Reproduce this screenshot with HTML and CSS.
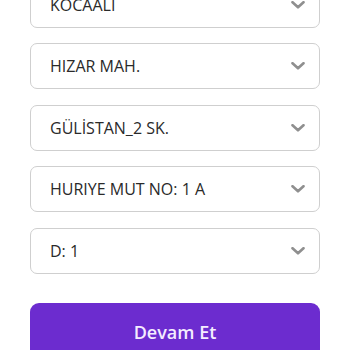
FILE: index.html
```html
<!DOCTYPE html>
<html>

<head>
  <title>Adres</title>
  <meta name="viewport" content="initial-scale=1.0">
  <link rel="stylesheet" href="styles.css">
</head>

<body>
  <form class="adres" onsubmit="return false;">
    <div class="secim">
      <span>KOCAALI</span>
      <svg class="ok" viewBox="0 0 14 8"><path d="M1.5 1.2 L7 6.3 L12.5 1.2" /></svg>
    </div>
    <div class="secim">
      <span>HIZAR MAH.</span>
      <svg class="ok" viewBox="0 0 14 8"><path d="M1.5 1.2 L7 6.3 L12.5 1.2" /></svg>
    </div>
    <div class="secim">
      <span>GÜLİSTAN_2 SK.</span>
      <svg class="ok" viewBox="0 0 14 8"><path d="M1.5 1.2 L7 6.3 L12.5 1.2" /></svg>
    </div>
    <div class="secim">
      <span>HURIYE MUT NO: 1 A</span>
      <svg class="ok" viewBox="0 0 14 8"><path d="M1.5 1.2 L7 6.3 L12.5 1.2" /></svg>
    </div>
    <div class="secim">
      <span>D: 1</span>
      <svg class="ok" viewBox="0 0 14 8"><path d="M1.5 1.2 L7 6.3 L12.5 1.2" /></svg>
    </div>
    <button type="button" class="devam">Devam Et</button>
  </form>
</body>

</html>
```

FILE: styles.css
```css
body {
  margin: 0;
  background-color: #ffffff;
  font-family: "Open Sans", "Noto Sans", sans-serif;
}

.adres {
  display: flex;
  flex-direction: column;
  gap: 15.5px;
  margin: -18.5px 30px 0 30px;
}

.secim {
  box-sizing: border-box;
  height: 46px;
  display: flex;
  align-items: center;
  justify-content: space-between;
  padding: 0 14px 0 19px;
  border: 1.5px solid #cfcfcf;
  border-radius: 7px;
  font-size: 16px;
  color: #2a2a2a;
}

.ok {
  width: 14px;
  height: 8px;
  fill: none;
  stroke: #8f8f8f;
  stroke-width: 2.6;
  stroke-linecap: round;
  stroke-linejoin: round;
}

.devam {
  margin-top: 14px;
  height: 60px;
  border: none;
  border-radius: 9px;
  background-color: #6c2ccf;
  color: #f4ecff;
  font-family: "Open Sans", "Noto Sans", sans-serif;
  font-size: 18px;
  font-weight: 600;
  padding-bottom: 4px;
}
```
